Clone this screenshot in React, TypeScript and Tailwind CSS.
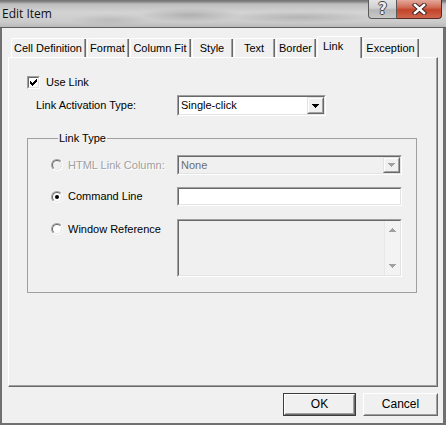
import React from "react";

type Tab = { label: string; width: string; active?: boolean };

const tabs: Tab[] = [
  { label: "Cell Definition", width: "w-[75px]" },
  { label: "Format", width: "w-[42px]" },
  { label: "Column Fit", width: "w-[61px]" },
  { label: "Style", width: "w-[41px]" },
  { label: "Text", width: "w-[41px]" },
  { label: "Border", width: "w-[40px]" },
  { label: "Link", width: "w-[45px]", active: true },
  { label: "Exception", width: "w-[56px]" },
];

// Two-tone sunken frame used by edit fields and combo boxes.
function Sunken({
  className = "",
  inner = "",
  children,
}: {
  className?: string;
  inner?: string;
  children?: React.ReactNode;
}) {
  return (
    <div
      className={`border border-t-[#a0a0a0] border-l-[#a0a0a0] border-r-white border-b-white ${className}`}
    >
      <div
        className={`h-full border border-t-[#696969] border-l-[#696969] border-r-[#e3e3e3] border-b-[#e3e3e3] ${inner}`}
      >
        {children}
      </div>
    </div>
  );
}

// Raised bevel, used for the combo drop button.
function DropButton({ disabled = false }: { disabled?: boolean }) {
  const fill = disabled ? "#a0a0a0" : "#000000";
  return (
    <div className="w-[17px] h-full border border-t-[#e3e3e3] border-l-[#e3e3e3] border-r-[#696969] border-b-[#696969] bg-[#f0f0f0]">
      <div className="h-full border border-t-white border-l-white border-r-[#a0a0a0] border-b-[#a0a0a0] flex items-center justify-center">
        <svg width="7" height="4" shapeRendering="crispEdges">
          <rect x="0" y="0" width="7" height="1" fill={fill} />
          <rect x="1" y="1" width="5" height="1" fill={fill} />
          <rect x="2" y="2" width="3" height="1" fill={fill} />
          <rect x="3" y="3" width="1" height="1" fill={fill} />
        </svg>
      </div>
    </div>
  );
}

function Radio({ checked = false, disabled = false }: { checked?: boolean; disabled?: boolean }) {
  return (
    <div className="w-[12px] h-[12px] rounded-full border border-t-[#a0a0a0] border-l-[#a0a0a0] border-r-white border-b-white shrink-0">
      <div
        className={`w-full h-full rounded-full border border-t-[#696969] border-l-[#696969] border-r-[#e3e3e3] border-b-[#e3e3e3] flex items-center justify-center ${
          disabled ? "bg-[#f0f0f0]" : "bg-white"
        }`}
      >
        {checked && <div className="w-[4px] h-[4px] rounded-full bg-black" />}
      </div>
    </div>
  );
}

function Checkbox() {
  return (
    <div className="w-[13px] h-[13px] border border-t-[#a0a0a0] border-l-[#a0a0a0] border-r-white border-b-white shrink-0">
      <div className="w-full h-full border border-t-[#696969] border-l-[#696969] border-r-[#e3e3e3] border-b-[#e3e3e3] bg-white">
        <svg width="9" height="9" viewBox="0 0 9 9" shapeRendering="crispEdges">
          <rect x="1" y="3" width="1" height="3" fill="#000" />
          <rect x="2" y="4" width="1" height="3" fill="#000" />
          <rect x="3" y="5" width="1" height="3" fill="#000" />
          <rect x="4" y="4" width="1" height="3" fill="#000" />
          <rect x="5" y="3" width="1" height="3" fill="#000" />
          <rect x="6" y="2" width="1" height="3" fill="#000" />
          <rect x="7" y="1" width="1" height="3" fill="#000" />
        </svg>
      </div>
    </div>
  );
}

function PushButton({ label, isDefault = false }: { label: string; isDefault?: boolean }) {
  return (
    <div className={`h-[23px] ${isDefault ? "w-[73px] border border-[#3c3c3c]" : "w-[75px]"}`}>
      <div className="h-full border border-t-white border-l-white border-r-[#696969] border-b-[#696969] bg-[#f0f0f0]">
        <div className="h-full border border-t-[#f0f0f0] border-l-[#f0f0f0] border-r-[#a0a0a0] border-b-[#a0a0a0] flex items-center justify-center text-[12px] text-black">
          {label}
        </div>
      </div>
    </div>
  );
}

export default function App() {
  return (
    <div className="w-[446px] h-[425px] bg-[#707070] flex flex-col overflow-hidden font-['Liberation_Sans',Arial,sans-serif] text-[11px] leading-[13px] text-black select-none">
      {/* caption with the glass frame behind it */}
      <div className="h-[28px] shrink-0 flex items-start border-b border-[#5e5e5e] bg-[radial-gradient(ellipse_50px_7px_at_190px_15px,rgba(60,60,60,0.22),transparent),radial-gradient(ellipse_70px_6px_at_300px_17px,rgba(60,60,60,0.18),transparent),radial-gradient(ellipse_40px_6px_at_110px_20px,rgba(60,60,60,0.12),transparent),linear-gradient(to_bottom,#6e6e6e_0px,#8c8c8c_2px,#bdbdbd_4px,#d3d3d3_12px,#cbcbcb_22px,#bababa_27px)]">
        <div className="pl-[2px] pt-[6px] text-[12px] leading-[16px] text-[#101010] font-['Open_Sans','Noto_Sans',sans-serif]">
          Edit Item
        </div>
        <div className="ml-auto flex items-start pr-[4px]">
          <div className="w-[29px] h-[19px] rounded-bl-[4px] border border-t-0 border-[#5a5a5a] bg-[linear-gradient(to_bottom,#e4e4e4,#d0d0d0_45%,#b6b6b6_55%,#c8c8c8)] flex items-center justify-center">
            <span className="text-[15px] leading-[15px] font-bold text-[#ececec] font-['DejaVu_Sans',sans-serif] [text-shadow:1px_0_0_#444,-1px_0_0_#444,0_1px_0_#444,0_-1px_0_#444]">
              ?
            </span>
          </div>
          <div className="w-[45px] h-[19px] rounded-br-[4px] border border-t-0 border-l-0 border-[#5a2a22] bg-[linear-gradient(to_bottom,#e3a99b,#d26d57_40%,#c2442b_55%,#d0664d)] flex items-center justify-center">
            <svg width="15" height="12" viewBox="0 0 15 12">
              <path d="M3 2 L12 10 M12 2 L3 10" stroke="#3a2020" strokeWidth="4.4" strokeLinecap="square" />
              <path d="M3 2 L12 10 M12 2 L3 10" stroke="#ffffff" strokeWidth="2.6" strokeLinecap="square" />
            </svg>
          </div>
        </div>
      </div>

      {/* client area */}
      <div className="flex-1 ml-[2px] mr-[3px] mb-[2px] bg-[#f0f0f0] pl-[6px] pr-[5px] pt-[8px] flex flex-col">
        {/* tab strip */}
        <div className="h-[21px] flex items-end gap-[1px] pl-[3px]">
          {tabs.map((t) =>
            t.active ? (
              <div
                key={t.label}
                className={`${t.width} h-[22px] -mb-px relative z-10 bg-[#f0f0f0] border-l border-t border-white rounded-tl-[2px] flex`}
              >
                <div className="flex-1 border-r border-[#696969]">
                  <div className="h-full border-r border-[#a0a0a0] pl-[5px] pt-[3px]">{t.label}</div>
                </div>
              </div>
            ) : (
              <div
                key={t.label}
                className={`${t.width} h-[19px] bg-[#f0f0f0] border-l border-t border-white rounded-tl-[2px] flex`}
              >
                <div className="flex-1 border-r border-[#696969]">
                  <div className="h-full border-r border-[#a0a0a0] flex items-center justify-center pt-[1px]">
                    {t.label}
                  </div>
                </div>
              </div>
            )
          )}
        </div>

        {/* tab page */}
        <div className="h-[330px] border-l border-t border-white border-r border-b border-r-[#696969] border-b-[#696969]">
          <div className="h-full border-r border-b border-[#a0a0a0] pl-[18px] pt-[18px] flex flex-col">
            <div className="flex items-center h-[13px]">
              <Checkbox />
              <span className="ml-[6px]">Use Link</span>
            </div>

            <div className="flex items-center mt-[6px] pl-[9px]">
              <span className="w-[141px]">Link Activation Type:</span>
              <Sunken className="w-[149px] h-[21px] bg-white" inner="flex items-stretch">
                <span className="flex-1 pl-[2px] flex items-center">Single-click</span>
                <DropButton />
              </Sunken>
            </div>

            <fieldset className="mt-[16px] w-[390px] border border-[#a0a0a0] pl-[23px] pb-[15px]">
              <legend className="ml-[7px] px-[1px] leading-[13px]">Link Type</legend>

              <div className="flex mt-[10px]">
                <div className="w-[126px] h-[20px] flex items-center">
                  <Radio disabled />
                  <span className="ml-[5px] text-[#a0a0a0] [text-shadow:1px_1px_0_#ffffff]">HTML Link Column:</span>
                </div>
                <Sunken className="w-[225px] h-[20px]" inner="flex items-stretch bg-[#f0f0f0]">
                  <span className="flex-1 pl-[2px] flex items-center text-[#6d6d6d]">None</span>
                  <DropButton disabled />
                </Sunken>
              </div>

              <div className="flex mt-[12px]">
                <div className="w-[126px] h-[19px] flex items-center">
                  <Radio checked />
                  <span className="ml-[5px]">Command Line</span>
                </div>
                <Sunken className="w-[225px] h-[19px]" inner="bg-white" />
              </div>

              <div className="flex mt-[13px]">
                <div className="w-[126px] h-[20px] flex items-center">
                  <Radio />
                  <span className="ml-[5px]">Window Reference</span>
                </div>
                <Sunken className="w-[225px] h-[58px]" inner="flex bg-[#f0f0f0]">
                  <div className="flex-1" />
                  <div className="w-[16px] h-full bg-[#f3f3f3] border-l border-[#e8e8e8] flex flex-col items-center justify-between py-[7px]">
                    <svg width="7" height="4" shapeRendering="crispEdges">
                      <rect x="3" y="0" width="1" height="1" fill="#a0a0a0" />
                      <rect x="2" y="1" width="3" height="1" fill="#a0a0a0" />
                      <rect x="1" y="2" width="5" height="1" fill="#a0a0a0" />
                      <rect x="0" y="3" width="7" height="1" fill="#a0a0a0" />
                    </svg>
                    <svg width="7" height="4" shapeRendering="crispEdges">
                      <rect x="0" y="0" width="7" height="1" fill="#a0a0a0" />
                      <rect x="1" y="1" width="5" height="1" fill="#a0a0a0" />
                      <rect x="2" y="2" width="3" height="1" fill="#a0a0a0" />
                      <rect x="3" y="3" width="1" height="1" fill="#a0a0a0" />
                    </svg>
                  </div>
                </Sunken>
              </div>
            </fieldset>
          </div>
        </div>

        {/* dialog buttons */}
        <div className="mt-[6px] flex justify-end gap-[7px]">
          <PushButton label="OK" isDefault />
          <PushButton label="Cancel" />
        </div>
      </div>
    </div>
  );
}
